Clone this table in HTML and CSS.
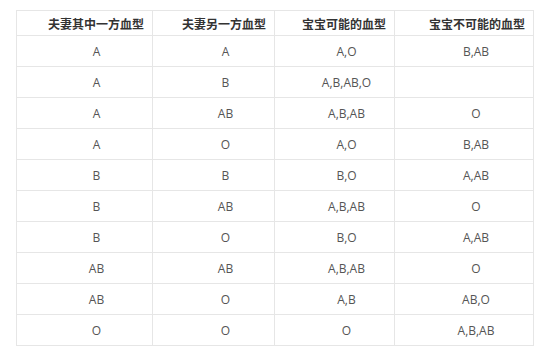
FILE: index.html
```html
<!DOCTYPE html>
<html>
<head>
<meta charset="utf-8">
<link rel="stylesheet" href="styles.css">
</head>
<body>
<table class="blood">
  <colgroup>
    <col class="c1"><col class="c2"><col class="c3"><col class="c4">
  </colgroup>
  <thead>
    <tr><th>夫妻其中一方血型</th><th>夫妻另一方血型</th><th>宝宝可能的血型</th><th>宝宝不可能的血型</th></tr>
  </thead>
  <tbody>
    <tr><td>A</td><td>A</td><td>A,O</td><td>B,AB</td></tr>
    <tr><td>A</td><td>B</td><td>A,B,AB,O</td><td></td></tr>
    <tr><td>A</td><td>AB</td><td>A,B,AB</td><td>O</td></tr>
    <tr><td>A</td><td>O</td><td>A,O</td><td>B,AB</td></tr>
    <tr><td>B</td><td>B</td><td>B,O</td><td>A,AB</td></tr>
    <tr><td>B</td><td>AB</td><td>A,B,AB</td><td>O</td></tr>
    <tr><td>B</td><td>O</td><td>B,O</td><td>A,AB</td></tr>
    <tr><td>AB</td><td>AB</td><td>A,B,AB</td><td>O</td></tr>
    <tr><td>AB</td><td>O</td><td>A,B</td><td>AB,O</td></tr>
    <tr><td>O</td><td>O</td><td>O</td><td>A,B,AB</td></tr>
  </tbody>
</table>
</body>
</html>
```
FILE: styles.css
```css
html, body {
  margin: 0;
  padding: 0;
  background: #ffffff;
}
body {
  padding: 10px 0 0 16px;
  font-family: "Open Sans", "Noto Sans CJK SC", sans-serif;
}
.blood {
  border-collapse: collapse;
  table-layout: fixed;
  width: 517px;
}
.c1 { width: 136px; }
.c2 { width: 122px; }
.c3 { width: 120px; }
.c4 { width: 139px; }
.blood th, .blood td {
  border: 1px solid #e6e6e6;
  padding: 0;
  box-sizing: border-box;
}
.blood th {
  height: 25px;
  text-align: right;
  padding-right: 8px;
  font-family: "Noto Sans CJK SC", sans-serif;
  font-weight: bold;
  font-size: 12px;
  color: #333333;
}
.blood td {
  height: 31px;
  text-align: center;
  padding-left: 24px;
  font-size: 12px;
  color: #555555;
}
```
